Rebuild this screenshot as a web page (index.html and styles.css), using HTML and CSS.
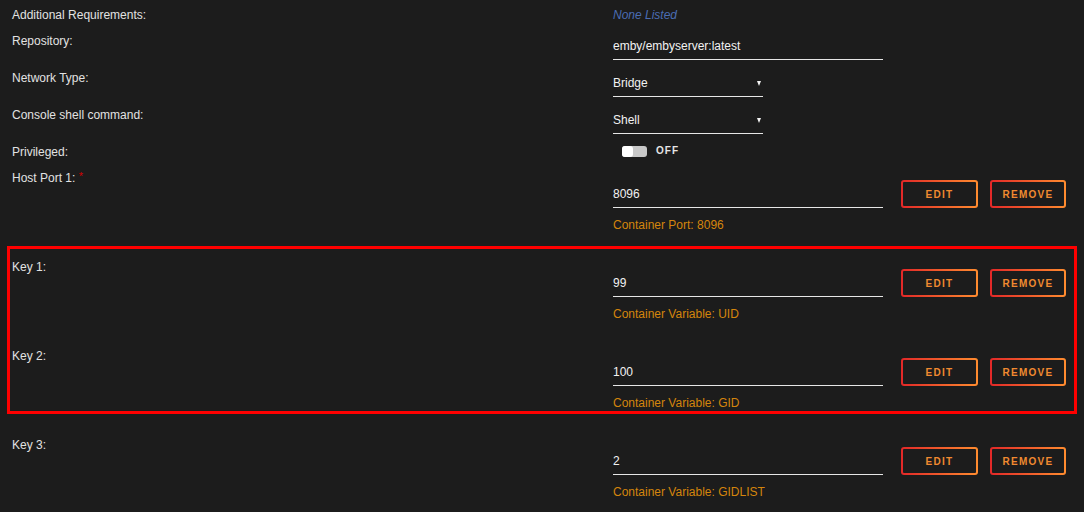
FILE: index.html
```html
<!DOCTYPE html>
<html>
<head>
<meta charset="utf-8">
<link rel="stylesheet" href="styles.css">
</head>
<body>
<div class="page">
  <div class="row row-info">
    <div class="label">Additional Requirements:</div>
    <div class="none">None Listed</div>
  </div>
  <div class="row row-field">
    <div class="label">Repository:</div>
    <div class="input wide">emby/embyserver:latest</div>
  </div>
  <div class="row row-field">
    <div class="label">Network Type:</div>
    <div class="input select"><span>Bridge</span><i class="caret"></i></div>
  </div>
  <div class="row row-field">
    <div class="label">Console shell command:</div>
    <div class="input select"><span>Shell</span><i class="caret"></i></div>
  </div>
  <div class="row row-toggle">
    <div class="label">Privileged:</div>
    <div class="toggle-wrap"><span class="toggle"><span class="knob"></span></span><span class="toggle-text">OFF</span></div>
  </div>

  <div class="row block">
    <div class="label">Host Port 1: <span class="req">*</span></div>
    <div class="value">
      <div class="controls">
        <div class="input wide port">8096</div>
        <button class="btn btn-edit">EDIT</button>
        <button class="btn btn-remove">REMOVE</button>
      </div>
      <div class="hint">Container Port: 8096</div>
    </div>
  </div>

  <div class="highlight">
    <div class="row block">
      <div class="label">Key 1:</div>
      <div class="value">
        <div class="controls">
          <div class="input wide port">99</div>
          <button class="btn btn-edit">EDIT</button>
          <button class="btn btn-remove">REMOVE</button>
        </div>
        <div class="hint">Container Variable: UID</div>
      </div>
    </div>
    <div class="row block">
      <div class="label">Key 2:</div>
      <div class="value">
        <div class="controls">
          <div class="input wide port">100</div>
          <button class="btn btn-edit">EDIT</button>
          <button class="btn btn-remove">REMOVE</button>
        </div>
        <div class="hint">Container Variable: GID</div>
      </div>
    </div>
  </div>

  <div class="row block after-box">
    <div class="label">Key 3:</div>
    <div class="value">
      <div class="controls">
        <div class="input wide port">2</div>
        <button class="btn btn-edit">EDIT</button>
        <button class="btn btn-remove">REMOVE</button>
      </div>
      <div class="hint">Container Variable: GIDLIST</div>
    </div>
  </div>
</div>
</body>
</html>
```

FILE: styles.css
```css
html, body {
  margin: 0;
  padding: 0;
  background: #1c1c1c;
  height: 100%;
  overflow: hidden;
}
body {
  font-family: "Liberation Sans", Arial, sans-serif;
  font-size: 12px;
  line-height: 16px;
  color: #e4e4e4;
}
.page {
  width: 1084px;
}
.row {
  display: grid;
  grid-template-columns: 601px 1fr;
  align-items: start;
  padding-left: 12px;
}
.label {
  height: 16px;
  white-space: nowrap;
  color: #e2e2e2;
}
.req {
  color: #d00000;
  font-size: 11px;
  vertical-align: top;
  position: relative;
  top: -2px;
}
.row-info {
  padding-top: 7px;
  margin-bottom: 10px;
}
.none {
  font-style: italic;
  color: #4a6cb3;
}
.row-field {
  margin-bottom: 10px;
}
.input {
  margin-top: 5px;
  line-height: 16px;
  padding-bottom: 5px;
  border-bottom: 1px solid #e6e6e6;
  color: #f2f2f2;
  white-space: nowrap;
}
.input.wide {
  width: 270px;
}
.input.select {
  width: 150px;
  display: flex;
  align-items: center;
  justify-content: space-between;
}
.caret {
  width: 0;
  height: 0;
  border-left: 2.5px solid transparent;
  border-right: 2.5px solid transparent;
  border-top: 5px solid #f2f2f2;
  margin-right: 2px;
}
.row-toggle {
  height: 26px;
}
.toggle-wrap {
  display: flex;
  align-items: center;
  margin-left: 9px;
  margin-top: 1px;
  height: 12px;
}
.toggle {
  width: 25px;
  height: 11px;
  border-radius: 3px;
  background: #c8c8c8;
  display: flex;
  align-items: center;
}
.knob {
  width: 11px;
  height: 11px;
  border-radius: 3px;
  background: #ffffff;
}
.toggle-text {
  margin-left: 9px;
  font-size: 10px;
  font-weight: bold;
  letter-spacing: 1px;
  color: #e6e6e6;
}
.block {
  margin-bottom: 26px;
}
.value {
  display: flex;
  flex-direction: column;
}
.controls {
  display: flex;
  align-items: flex-start;
}
.input.port {
  margin-top: 16px;
}
.btn {
  margin-top: 10px;
  height: 28px;
  padding: 0;
  border: 2px solid transparent;
  border-radius: 3px;
  background: linear-gradient(#1c1c1c, #1c1c1c) padding-box,
              linear-gradient(90deg, #e22828, #ff8c2f) border-box;
  color: #f08a30;
  font-family: "Liberation Sans", Arial, sans-serif;
  font-size: 10px;
  font-weight: bold;
  letter-spacing: 1.3px;
  text-align: center;
}
.btn-edit {
  width: 77px;
  margin-left: 18px;
}
.btn-remove {
  width: 76px;
  margin-left: 12px;
}
.hint {
  margin-top: 9px;
  color: #d4850c;
  white-space: nowrap;
}
.highlight {
  margin: -13px 7px 0 7px;
  border: 3px solid #ff0000;
  padding: 10px 0 0 0;
}
.highlight .row {
  padding-left: 2px;
}
.highlight .block:last-child {
  margin-bottom: 0;
}
.after-box {
  margin-top: 23px;
}
```
